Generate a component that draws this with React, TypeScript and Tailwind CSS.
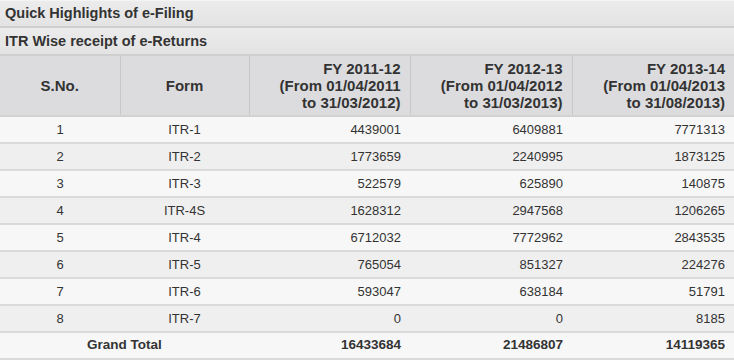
const rows = [
  ["1", "ITR-1", "4439001", "6409881", "7771313"],
  ["2", "ITR-2", "1773659", "2240995", "1873125"],
  ["3", "ITR-3", "522579", "625890", "140875"],
  ["4", "ITR-4S", "1628312", "2947568", "1206265"],
  ["5", "ITR-4", "6712032", "7772962", "2843535"],
  ["6", "ITR-5", "765054", "851327", "224276"],
  ["7", "ITR-6", "593047", "638184", "51791"],
  ["8", "ITR-7", "0", "0", "8185"],
];

const years = [
  ["FY 2011-12", "(From 01/04/2011", "to 31/03/2012)"],
  ["FY 2012-13", "(From 01/04/2012", "to 31/03/2013)"],
  ["FY 2013-14", "(From 01/04/2013", "to 31/08/2013)"],
];

export default function App() {
  return (
    <div
      className="w-[734px] bg-white text-[#333]"
      style={{ fontFamily: '"Liberation Sans", Arial, sans-serif' }}
    >
      <div className="h-[28px] border-t border-b-2 border-t-[#f4f4f4] border-b-[#cfcfcf] bg-gradient-to-b from-[#ececec] to-[#e3e3e3] pl-[5px] text-[14.5px] font-bold leading-[25px]">
        Quick Highlights of e-Filing
      </div>
      <div className="h-[28px] border-b-2 border-b-[#cfcfcf] bg-gradient-to-b from-[#ececec] to-[#e3e3e3] pl-[5px] text-[14.5px] font-bold leading-[26px]">
        ITR Wise receipt of e-Returns
      </div>
      <table className="w-[734px] table-fixed border-collapse">
        <colgroup>
          <col className="w-[120px]" />
          <col className="w-[129px]" />
          <col className="w-[161px]" />
          <col className="w-[162px]" />
          <col className="w-[162px]" />
        </colgroup>
        <thead>
          <tr className="h-[60px] border-b-2 border-[#d2d2d2] bg-[#dcdcde] text-[15px] font-bold leading-[17px]">
            <th className="border-r border-[#c8c8c8] text-center">S.No.</th>
            <th className="border-r border-[#c8c8c8] text-center">Form</th>
            {years.map((y, i) => (
              <th
                key={y[0]}
                className={`pr-[9px] text-right ${i < 2 ? "border-r border-[#c8c8c8]" : ""}`}
              >
                {y[0]}
                <br />
                {y[1]}
                <br />
                {y[2]}
              </th>
            ))}
          </tr>
        </thead>
        <tbody className="text-[13px]">
          {rows.map((r, i) => (
            <tr
              key={r[0]}
              className={`h-[27px] border-b-2 border-[#dadada] ${i % 2 === 0 ? "bg-[#f7f7f7]" : "bg-[#efefef]"}`}
            >
              <td className="text-center">{r[0]}</td>
              <td className="text-center">{r[1]}</td>
              <td className="pr-[9px] text-right">{r[2]}</td>
              <td className="pr-[9px] text-right">{r[3]}</td>
              <td className="pr-[9px] text-right">{r[4]}</td>
            </tr>
          ))}
          <tr className="h-[27px] border-b-2 border-[#dadada] bg-[#f7f7f7] text-[13.5px] font-bold">
            <td colSpan={2} className="text-center">
              Grand Total
            </td>
            <td className="pr-[9px] text-right">16433684</td>
            <td className="pr-[9px] text-right">21486807</td>
            <td className="pr-[9px] text-right">14119365</td>
          </tr>
        </tbody>
      </table>
    </div>
  );
}
